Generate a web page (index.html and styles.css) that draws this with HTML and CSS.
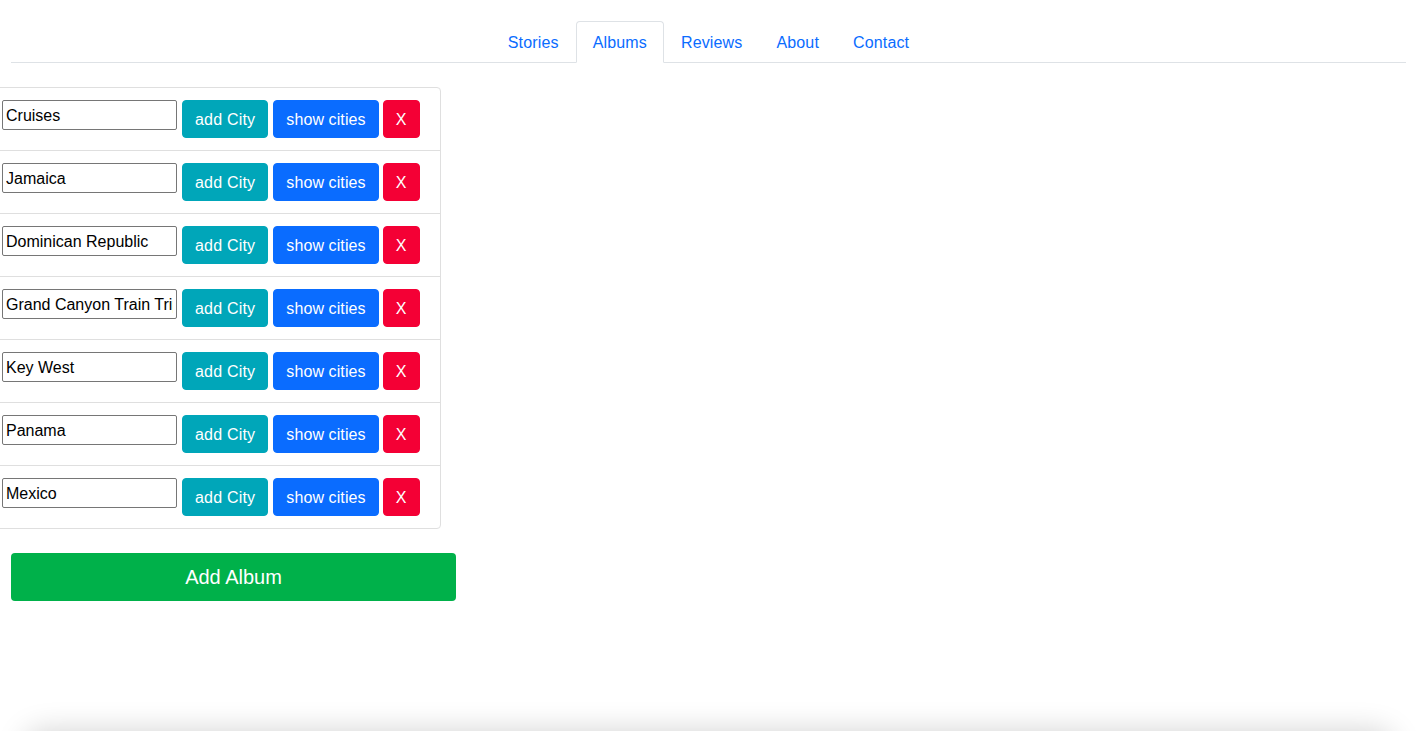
FILE: index.html
```html
<!DOCTYPE html>
<html lang="en">
<head>
<meta charset="utf-8">
<title>Albums</title>
<link rel="stylesheet" href="styles.css">
</head>
<body>
<div class="page">
  <ul class="tabs">
    <li><a class="tab" href="#">Stories</a></li>
    <li><a class="tab active" href="#">Albums</a></li>
    <li><a class="tab" href="#">Reviews</a></li>
    <li><a class="tab" href="#">About</a></li>
    <li><a class="tab" href="#">Contact</a></li>
  </ul>
  <ul class="albums">
    <li class="album"><input class="name" value="Cruises"><button class="btn btn-teal">add City</button><button class="btn btn-blue">show cities</button><button class="btn btn-red">X</button></li>
    <li class="album"><input class="name" value="Jamaica"><button class="btn btn-teal">add City</button><button class="btn btn-blue">show cities</button><button class="btn btn-red">X</button></li>
    <li class="album"><input class="name" value="Dominican Republic"><button class="btn btn-teal">add City</button><button class="btn btn-blue">show cities</button><button class="btn btn-red">X</button></li>
    <li class="album"><input class="name" value="Grand Canyon Train Trip"><button class="btn btn-teal">add City</button><button class="btn btn-blue">show cities</button><button class="btn btn-red">X</button></li>
    <li class="album"><input class="name" value="Key West"><button class="btn btn-teal">add City</button><button class="btn btn-blue">show cities</button><button class="btn btn-red">X</button></li>
    <li class="album"><input class="name" value="Panama"><button class="btn btn-teal">add City</button><button class="btn btn-blue">show cities</button><button class="btn btn-red">X</button></li>
    <li class="album"><input class="name" value="Mexico"><button class="btn btn-teal">add City</button><button class="btn btn-blue">show cities</button><button class="btn btn-red">X</button></li>
  </ul>
  <button class="add-album">Add Album</button>
</div>
<div class="bottom-shadow"></div>
</body>
</html>
```
FILE: styles.css
```css
* { box-sizing: border-box; }
html, body {
  margin: 0;
  padding: 0;
  background: #fff;
  font-family: "Liberation Sans", Arial, Helvetica, sans-serif;
  font-size: 16px;
  color: #212529;
  overflow: hidden;
}
.page {
  padding: 21px 12px 0 11px;
}
.tabs {
  list-style: none;
  margin: 0;
  padding: 0;
  display: flex;
  justify-content: center;
  border-bottom: 1px solid #dee2e6;
}
.tabs li { margin-bottom: -1px; }
.tab {
  display: block;
  padding: 9px 16px 7px;
  line-height: 24px;
  color: #0a6cff;
  text-decoration: none;
  letter-spacing: 0.15px;
  white-space: nowrap;
  border: 1px solid transparent;
  border-top-left-radius: 4px;
  border-top-right-radius: 4px;
}
.tab.active {
  border-color: #dee2e6 #dee2e6 #fff;
  background: #fff;
}
.albums {
  list-style: none;
  margin: 24px 0 0 -30px;
  padding: 0;
  width: 460px;
  border: 1px solid #dfdfdf;
  border-radius: 4px;
}
.album {
  display: flex;
  align-items: flex-start;
  gap: 5px;
  padding: 12px 20px;
  border-top: 1px solid #dfdfdf;
}
.album:first-child { border-top: 0; }
.name {
  flex-shrink: 0;
  width: 175px;
  height: 30px;
  margin: 0;
  padding: 4px 3px 2px;
  border: 1px solid #767676;
  border-radius: 2px;
  font-family: "Liberation Sans", Arial, sans-serif;
  font-size: 16px;
  color: #000;
  background: #fff;
}
.btn {
  flex-shrink: 0;
  height: 38px;
  margin: 0;
  padding: 2px 12px 0;
  border: 1px solid transparent;
  border-radius: 4px;
  font-family: "Liberation Sans", Arial, sans-serif;
  font-size: 16px;
  letter-spacing: 0.2px;
  white-space: nowrap;
  color: #fff;
  cursor: pointer;
}
.btn-teal { background: #00a6b9; border-color: #00a6b9; }
.btn-blue { background: #0a6cff; border-color: #0a6cff; letter-spacing: 0.1px; }
.btn-red { background: #f40035; border-color: #f40035; margin-left: -1px; }
.add-album {
  display: block;
  margin-top: 24px;
  width: 445px;
  height: 48px;
  border: 0;
  border-radius: 4px;
  background: #00b14a;
  color: #fff;
  font-family: "Liberation Sans", Arial, sans-serif;
  font-size: 20px;
}
.bottom-shadow {
  position: fixed;
  left: 24px;
  right: 24px;
  bottom: -40px;
  height: 40px;
  border-radius: 20px;
  background: #fff;
  box-shadow: 0 0 30px rgba(0, 0, 0, 0.18);
}
```
